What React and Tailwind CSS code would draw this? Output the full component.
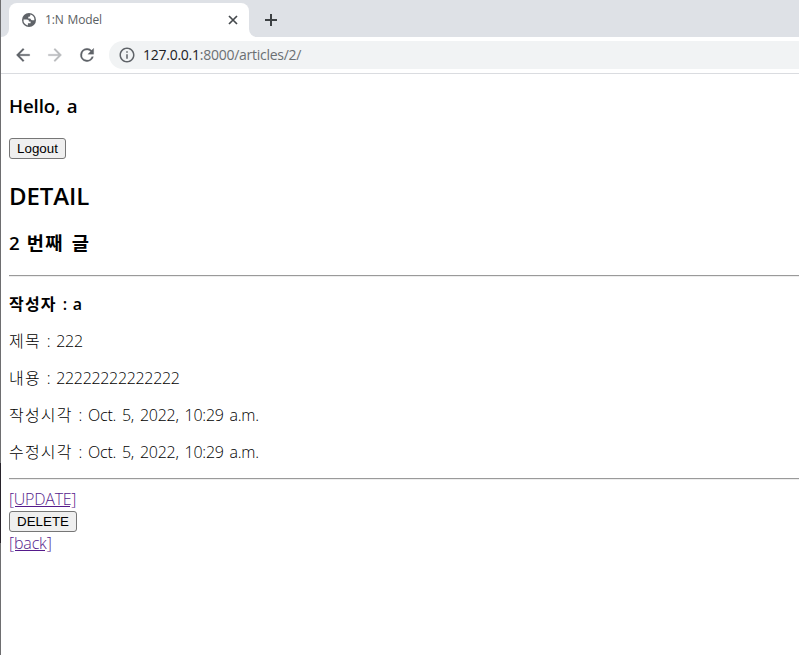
import React from "react";

const icon = "block shrink-0";

function TabStrip() {
  return (
    <div className="flex h-[37px] bg-[#dee1e6]">
      <div className="w-2 bg-white">
        <div className="h-full rounded-br-lg bg-[#dee1e6]" />
      </div>
      <div className="mt-[3px] flex h-[34px] w-[240px] items-center rounded-t-lg bg-white pl-[13px] pr-[11px]">
        <svg className={icon} width="14" height="14" viewBox="0 0 14 14">
          <circle cx="7" cy="7" r="7" fill="#5f6368" />
          <path d="M1.5 6.6H4.9C6.7 6.6 6.9 7.6 6.9 8.5H8.6V10.3H5.9V12.4A5.5 5.5 0 0 1 1.5 6.6Z" fill="#fff" />
          <path d="M8.3 1.6V2.5C8.3 3.5 7.5 3.7 6.3 3.7V5.4H7.8C9 5.4 8.9 7.2 10 7.2H12.4A5.5 5.5 0 0 0 8.3 1.6Z" fill="#fff" />
        </svg>
        <span className="ml-[9px] text-[12px] leading-4 tracking-[-0.15px] [word-spacing:1px] text-[#5a5e62]">1:N Model</span>
        <svg className="ml-auto block" width="10" height="10" viewBox="0 0 10 10" fill="none" stroke="#45494d" strokeWidth="1.7">
          <path d="M1 1l8 8M9 1l-8 8" />
        </svg>
      </div>
      <div className="flex-1 bg-white">
        <div className="flex h-full items-center rounded-bl-lg bg-[#dee1e6] pl-4 pt-[3px]">
          <svg className={icon} width="12" height="12" viewBox="0 0 12 12" fill="none" stroke="#3c4043" strokeWidth="2">
            <path d="M6 0v12M0 6h12" />
          </svg>
        </div>
      </div>
    </div>
  );
}

function Toolbar() {
  return (
    <div className="flex h-[37px] items-center border-b border-[#dadce0] bg-white pl-3">
      <svg className={icon} width="20" height="20" viewBox="0 0 24 24" fill="#5f6368" stroke="#5f6368" strokeWidth="0.3">
        <path d="M20 11H7.83l5.59-5.59L12 4l-8 8 8 8 1.41-1.41L7.83 13H20v-2z" />
      </svg>
      <svg className={"ml-3 " + icon} width="20" height="20" viewBox="0 0 24 24" fill="#babcbe" stroke="#babcbe" strokeWidth="0.3">
        <path d="M12 4l-1.41 1.41L16.17 11H4v2h12.17l-5.58 5.59L12 20l8-8-8-8z" />
      </svg>
      <svg className={"ml-3 " + icon} width="20" height="20" viewBox="0 0 24 24" fill="#5f6368" stroke="#5f6368" strokeWidth="0.3">
        <path d="M17.65 6.35A7.958 7.958 0 0 0 12 4a8 8 0 1 0 7.73 10h-2.08A6 6 0 1 1 12 6c1.66 0 3.14.69 4.22 1.78L13 11h7V4l-2.35 2.35z" />
      </svg>
      <div className="ml-3 flex h-7 flex-1 items-center rounded-l-full bg-[#f1f3f4] pl-[9px]">
        <svg className={icon} width="18" height="18" viewBox="0 0 24 24" fill="#5f6368">
          <path d="M11 17h2v-6h-2v6zm1-15C6.48 2 2 6.48 2 12s4.48 10 10 10 10-4.48 10-10S17.52 2 12 2zm0 18c-4.41 0-8-3.59-8-8s3.59-8 8-8 8 3.59 8 8-3.59 8-8 8zM11 9h2V7h-2v2z" />
        </svg>
        <span className="ml-[7px] text-[14px] leading-5 tracking-[-0.26px] text-[#6b6f73]">
          <span className="text-[#202124]">127.0.0.1</span>:8000/articles/2/
        </span>
      </div>
    </div>
  );
}

function Button({ children, className }) {
  return (
    <button className={"block h-[21px] rounded-[3px] border border-[#767676] bg-[#efefef] text-center font-['Liberation_Sans',Arial,sans-serif] text-[13.33px] leading-[19px] text-black " + className}>
      {children}
    </button>
  );
}

function Rule() {
  return <hr className="h-[2px] border-t border-b border-t-[#9a9a9a] border-b-[#eeeeee]" />;
}

function Field({ label, children, className = "" }) {
  return (
    <p className={"h-[21px] " + className}>
      <span className="tracking-[1.2px]">{label}</span> : {children}
    </p>
  );
}

export default function App() {
  return (
    <div className="flex h-[655px] w-[799px] overflow-hidden bg-white font-['Open_Sans','Noto_Sans_CJK_KR',sans-serif]">
      <div className="flex w-px flex-col bg-[#6e6e70]">
        <div className="mt-[463px] h-20 bg-[#28232b]" />
      </div>
      <div className="flex-1">
        <TabStrip />
        <Toolbar />
        <main className="pl-2 text-[16px] text-black">
          <h3 className="mt-5 h-6 whitespace-nowrap text-[18.7px] font-semibold leading-6 tracking-[-0.1px] [word-spacing:2px]">Hello, a</h3>
          <Button className="mt-5 w-[57px]">Logout</Button>
          <h2 className="mt-[21px] h-8 whitespace-nowrap text-[24px] font-semibold leading-8 tracking-[-0.1px]">DETAIL</h2>
          <h3 className="mt-[19px] h-6 whitespace-nowrap text-[18.7px] font-semibold leading-6 [word-spacing:2.2px]">
            2 <span className="tracking-[1.2px]">번째 글</span>
          </h3>
          <div className="mt-[20px]"><Rule /></div>
          <div className="mt-[17px] flex flex-col gap-4 whitespace-nowrap font-light leading-[21px] tracking-[-0.25px] [word-spacing:2px]">
            <Field label="작성자" className="font-semibold">a</Field>
            <Field label="제목">222</Field>
            <Field label="내용"><span className="tracking-[-0.32px]">22222222222222</span></Field>
            <Field label="작성시각">Oct. 5, 2022, 10:29 a.m.</Field>
            <Field label="수정시각">Oct. 5, 2022, 10:29 a.m.</Field>
          </div>
          <div className="mt-[15px]"><Rule /></div>
          <div className="mt-[8px] h-[23px] leading-[22px]">
            <a className="font-light tracking-[-0.25px] text-[#551a8b] underline">[UPDATE]</a>
          </div>
          <Button className="w-[68px]">DELETE</Button>
          <div className="h-[22px] leading-[22px]">
            <a className="font-light tracking-[-0.15px] text-[#551a8b] underline">[back]</a>
          </div>
        </main>
      </div>
    </div>
  );
}
